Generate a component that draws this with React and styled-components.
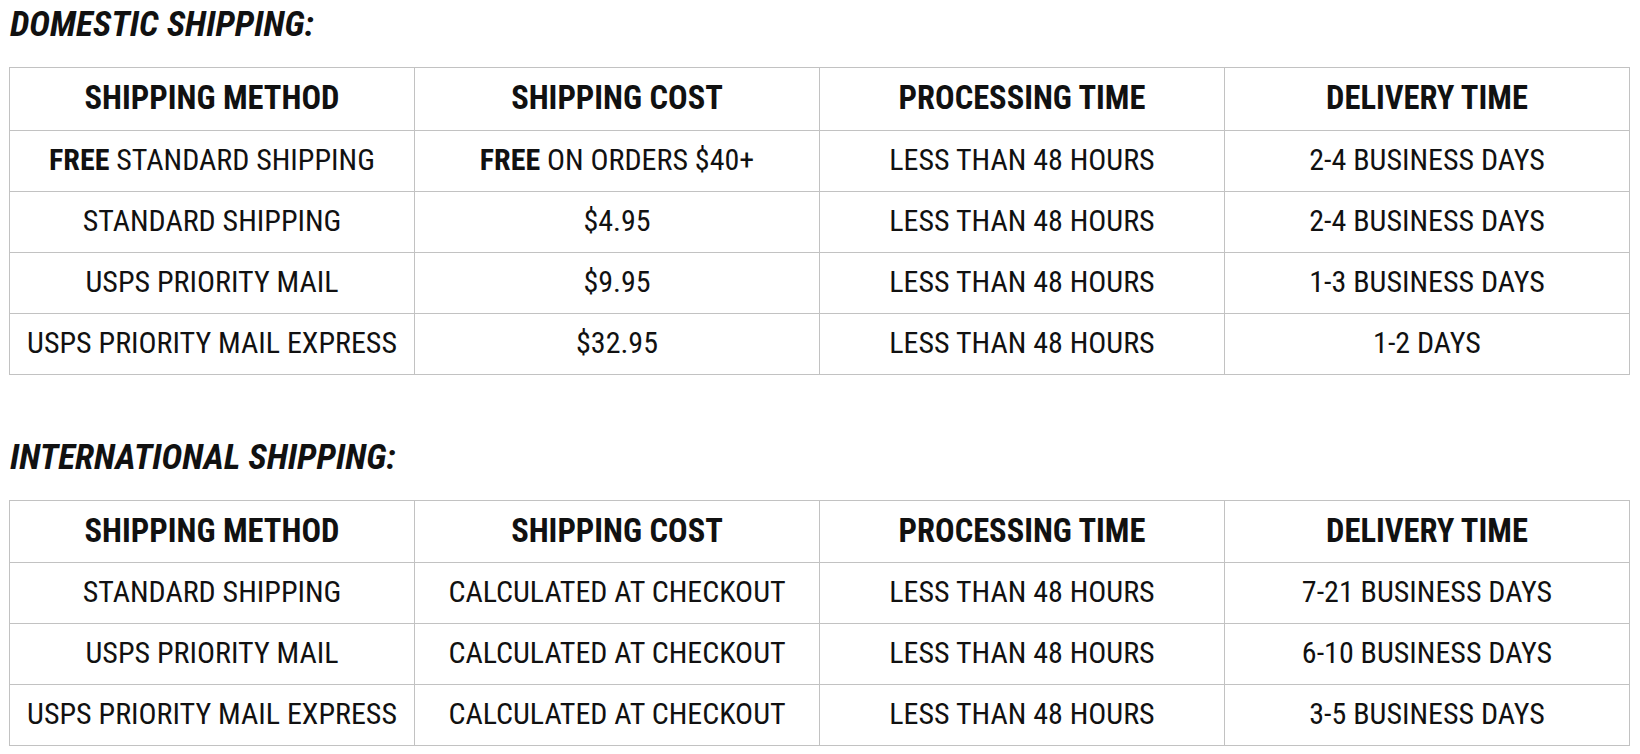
import React from "react";
import styled, { createGlobalStyle } from "styled-components";

const GlobalStyle = createGlobalStyle`
  body {
    margin: 0;
    background: #ffffff;
    font-family: "Roboto Condensed", Roboto, "Liberation Sans", sans-serif;
    color: #111111;
  }
`;

const Page = styled.div`
  padding: 2px 11px 0 9px;
`;

const Heading = styled.h2`
  margin: 0 0 21px 1px;
  font-size: 35.3px;
  line-height: 44px;
  font-weight: 700;
  font-style: italic;
  text-transform: uppercase;
`;

const Table = styled.table`
  width: 1621px;
  border-collapse: collapse;
  table-layout: fixed;
  margin-bottom: ${(props) => props.gap || 0}px;
`;

const Th = styled.th`
  height: ${(props) => props.h}px;
  padding: 0 0 2px;
  border: 1px solid #c2c2c2;
  font-size: 32.5px;
  font-weight: 700;
  text-align: center;
  vertical-align: middle;
`;

const Td = styled.td`
  height: 56px;
  padding: 0 0 4px;
  border: 1px solid #c2c2c2;
  font-size: 30px;
  font-weight: 400;
  text-align: center;
  vertical-align: middle;
`;

const Strong = styled.b`
  font-weight: 700;
`;

const headers = ["Shipping Method", "Shipping Cost", "Processing Time", "Delivery Time"];

const domestic = [
  [<><Strong>FREE</Strong> STANDARD SHIPPING</>, <><Strong>FREE</Strong> ON ORDERS $40+</>, "LESS THAN 48 HOURS", "2-4 BUSINESS DAYS"],
  ["STANDARD SHIPPING", "$4.95", "LESS THAN 48 HOURS", "2-4 BUSINESS DAYS"],
  ["USPS PRIORITY MAIL", "$9.95", "LESS THAN 48 HOURS", "1-3 BUSINESS DAYS"],
  ["USPS PRIORITY MAIL EXPRESS", "$32.95", "LESS THAN 48 HOURS", "1-2 DAYS"],
];

const international = [
  ["STANDARD SHIPPING", "CALCULATED AT CHECKOUT", "LESS THAN 48 HOURS", "7-21 BUSINESS DAYS"],
  ["USPS PRIORITY MAIL", "CALCULATED AT CHECKOUT", "LESS THAN 48 HOURS", "6-10 BUSINESS DAYS"],
  ["USPS PRIORITY MAIL EXPRESS", "CALCULATED AT CHECKOUT", "LESS THAN 48 HOURS", "3-5 BUSINESS DAYS"],
];

const ShippingTable = ({ rows, gap, headerHeight }) => (
  <Table gap={gap}>
    <thead>
      <tr>
        {headers.map((h) => (
          <Th key={h} h={headerHeight}>{h.toUpperCase()}</Th>
        ))}
      </tr>
    </thead>
    <tbody>
      {rows.map((row, i) => (
        <tr key={i}>
          {row.map((cell, j) => (
            <Td key={j}>{cell}</Td>
          ))}
        </tr>
      ))}
    </tbody>
  </Table>
);

const App = () => (
  <>
    <GlobalStyle />
    <Page>
      <Heading>Domestic Shipping:</Heading>
      <ShippingTable rows={domestic} gap={60} headerHeight={60} />
      <Heading>International Shipping:</Heading>
      <ShippingTable rows={international} headerHeight={59} />
    </Page>
  </>
);

export default App;
